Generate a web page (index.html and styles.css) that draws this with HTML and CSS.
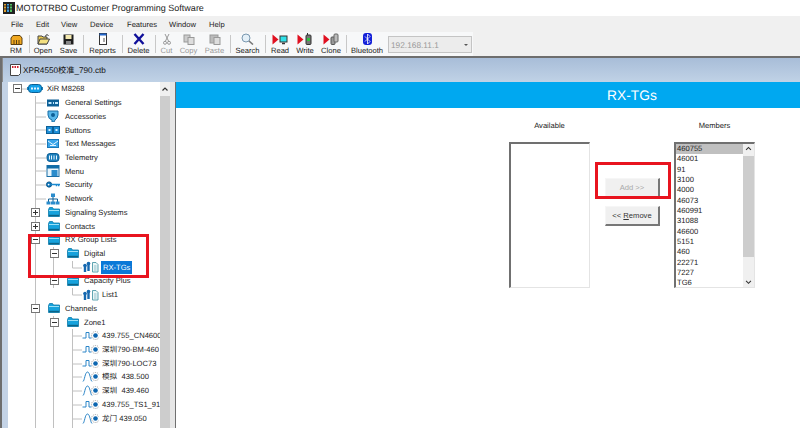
FILE: index.html
```html
<!DOCTYPE html>
<html lang="en">
<head>
  <meta charset="UTF-8">
  <title>MOTOTRBO Customer Programming Software</title>
  <link rel="stylesheet" href="styles.css">
</head>
<body>
  <svg class="defs" width="0" height="0">
    <symbol id="i-radio" viewBox="0 0 16 9"><path d="M0 4.500h16" stroke="#1c7fb8" stroke-width="3"/><rect x="1.500" y="0.500" width="13" height="8" rx="3" fill="#12a0e8" stroke="#0b5f94"/><path d="M4 4.500h8" stroke="#dff3ff" stroke-width="2" stroke-dasharray="2 1"/></symbol>
    <symbol id="i-settings" viewBox="0 0 14 10"><rect x="1" y="1.500" width="12" height="7" fill="#0c5f96"/><path d="M2.500 5h3M7 5h1M9 5h3" stroke="#bfe8ff" stroke-width="2"/></symbol>
    <symbol id="i-acc" viewBox="0 0 14 12"><path d="M2 1h10v4a5 7 0 0 1-3 5l-1 2H6V10A5 6 0 0 1 2 5z" fill="#58b7ea" stroke="#1a6ea6"/><circle cx="7" cy="5" r="2" fill="#0c5f96"/></symbol>
    <symbol id="i-buttons" viewBox="0 0 14 8"><rect x="0.500" y="0.500" width="6" height="7" fill="#1d8fd8" stroke="#0c5f96"/><rect x="7.500" y="0.500" width="6" height="7" fill="#1d8fd8" stroke="#0c5f96"/><path d="M2.500 3h2v2h-2zM9.500 3h2v2h-2z" fill="#d6f0ff"/></symbol>
    <symbol id="i-mail" viewBox="0 0 12 9"><rect x="0.500" y="0.500" width="11" height="8" fill="#39a5ea" stroke="#1a78b8"/><path d="M1 2l5 3.500L11 2M3 6.500h6" stroke="#e4f5ff" fill="none"/></symbol>
    <symbol id="i-tele" viewBox="0 0 13 9"><rect x="0.500" y="0.500" width="12" height="8" rx="3" fill="#1c7fbc" stroke="#0c5f96"/><path d="M3 2.500v4M5 2.500v4M7.500 2.500v4M10 2.500v4" stroke="#e6f6ff"/></symbol>
    <symbol id="i-menu" viewBox="0 0 13 12"><rect x="0.500" y="0.500" width="12" height="11" fill="#e8f5fc" stroke="#1a6ea6"/><rect x="0.500" y="0.500" width="12" height="3" fill="#0f6da8"/><rect x="5" y="5" width="6" height="6" fill="#2b8ccc"/></symbol>
    <symbol id="i-key" viewBox="0 0 16 7"><circle cx="3.500" cy="3.500" r="3" fill="#0c78c0" stroke="#074e80"/><circle cx="3" cy="3.500" r="1" fill="#fff"/><path d="M6 3.500h10M12 3.500v2M14.500 3.500v2" stroke="#1c8ad0" stroke-width="1.600"/></symbol>
    <symbol id="i-net" viewBox="0 0 14 12"><path d="M7 3v3M2.500 6h9M2.500 6v3M7 6v3M11.500 6v3" stroke="#0c5f96" fill="none"/><rect x="5" y="0.500" width="4" height="3.500" fill="#2b8ccc"/><rect x="0.500" y="8.500" width="4" height="3" fill="#2b8ccc"/><rect x="5" y="8.500" width="4" height="3" fill="#2b8ccc"/><rect x="9.500" y="8.500" width="4" height="3" fill="#2b8ccc"/></symbol>
    <symbol id="i-folder" viewBox="0 0 12 10"><path d="M0.500 2.500l1-2h3l1 1.500h6v7.500h-11z" fill="#16a2dc" stroke="#0d7aa8" stroke-width="0.800"/><path d="M1 3.500h10" stroke="#9be0f6"/><path d="M1 8.500h10" stroke="#0a6488" stroke-width="1.400"/></symbol>
    <symbol id="i-group" viewBox="0 0 17 12"><path d="M3 4v7M6.500 2v8" stroke="#1668b0" stroke-width="2.400"/><circle cx="3" cy="4.500" r="1.800" fill="#1668b0"/><circle cx="6.500" cy="2.500" r="1.800" fill="#1668b0"/><path d="M10.500 1.500h3.500l2 2v7.500h-5.500z" fill="#eaf7f7" stroke="#4f9aa8" stroke-width="0.900"/><path d="M12 5h2.500M12 7h2.500M12 9h2.500" stroke="#6fa8b8" stroke-width="0.700"/></symbol>
    <symbol id="i-digital" viewBox="0 0 16 11"><path d="M0 8h3.500V2.500h3V8H9" stroke="#2b85c8" fill="none"/><circle cx="13" cy="5.500" r="2.300" fill="#0d66b0"/><circle cx="13" cy="5.500" r="4" fill="none" stroke="#777" stroke-width="0.700" stroke-dasharray="1 1"/></symbol>
    <symbol id="i-analog" viewBox="0 0 16 11"><path d="M0.500 10.500C2 10 2.500 1 5 1s3 9 4.500 9.500" stroke="#2b85c8" fill="none"/><circle cx="13" cy="5.500" r="2.300" fill="#0d66b0"/><circle cx="13" cy="5.500" r="4" fill="none" stroke="#777" stroke-width="0.700" stroke-dasharray="1 1"/></symbol>
    <symbol id="i-red" viewBox="0 0 7 11"><path d="M0.500 0.500L6.500 5.500L0.500 10.500z" fill="#e01020"/></symbol>
  </svg>

  <div class="titlebar">
    <svg class="app-icon" width="12" height="12" viewBox="0 0 12 12"><rect width="12" height="12" fill="#222"/><path d="M2 2v8" stroke="#e0a030" stroke-width="2"/><path d="M5 2v8" stroke="#40a0e0" stroke-width="2"/><path d="M8 2v8" stroke="#50c060" stroke-width="2"/><path d="M0 4h12M0 7h12" stroke="#222"/></svg>
    <span>MOTOTRBO Customer Programming Software</span>
  </div>

  <div class="menubar">
    <span class="m-file">File</span><span class="m-edit">Edit</span><span class="m-view">View</span><span class="m-device">Device</span><span class="m-features">Features</span><span class="m-window">Window</span><span>Help</span>
  </div>

  <div class="toolbar">
    <div class="tb w24"><svg width="13" height="10" viewBox="0 0 13 10"><path d="M1 9.500V3l2-2.500h7L12 3v6.500z" fill="#f0a820" stroke="#5b3f10"/><path d="M4 9V5M6.500 9V5M9 9V5" stroke="#5b3f10"/></svg>RM</div>
    <i class="sep w2"></i>
    <div class="tb w26"><svg width="13" height="11" viewBox="0 0 13 11"><path d="M1 10V2h4l1 1h4v7z" fill="#e8c850" stroke="#444"/><path d="M1 10l2-5h9.500L10 10z" fill="#f4e080" stroke="#444"/><path d="M8.500 2.500c0-2 2-2 3-1" stroke="#222" fill="none"/></svg>Open</div>
    <div class="tb w25"><svg width="11" height="11" viewBox="0 0 11 11"><rect x="0.500" y="0.500" width="10" height="10" fill="#1e1e1e"/><rect x="2.500" y="1" width="6" height="4" fill="#f4e9b0"/><rect x="3" y="7" width="5" height="3.500" fill="#888"/></svg>Save</div>
    <i class="sep w4"></i>
    <div class="tb w35"><svg width="8" height="12" viewBox="0 0 8 12"><rect x="0.500" y="0.500" width="7" height="11" fill="#fff" stroke="#333"/><rect x="0.500" y="0.500" width="7" height="2" fill="#2266cc"/><path d="M5 5v4" stroke="#555"/></svg>Reports</div>
    <i class="sep w4"></i>
    <div class="tb w29"><svg width="12" height="12" viewBox="0 0 12 12"><path d="M1.500 1L10.500 11M10.500 1L1.500 11" stroke="#10109a" stroke-width="2.400"/></svg>Delete</div>
    <i class="sep w4"></i>
    <div class="tb w19 off"><svg width="8" height="12" viewBox="0 0 8 12"><path d="M2 1l3.500 7M6 1L2.500 8" stroke="#999"/><circle cx="2" cy="9.800" r="1.500" fill="none" stroke="#999"/><circle cx="6" cy="9.800" r="1.500" fill="none" stroke="#999"/></svg>Cut</div>
    <div class="tb w25 off"><svg width="12" height="11" viewBox="0 0 12 11"><rect x="1" y="1" width="6" height="7" fill="#ccc" stroke="#999"/><rect x="5" y="3.500" width="6" height="7" fill="#ddd" stroke="#999"/></svg>Copy</div>
    <div class="tb w27 off"><svg width="12" height="11" viewBox="0 0 12 11"><rect x="1" y="1" width="8" height="8" fill="#bbb" stroke="#999"/><rect x="5" y="3.500" width="6" height="7" fill="#ddd" stroke="#999"/></svg>Paste</div>
    <i class="sep w5"></i>
    <div class="tb w29"><svg width="13" height="12" viewBox="0 0 13 12"><circle cx="5" cy="5" r="4" fill="#e4f0f8" stroke="#7a98b0"/><path d="M8 8l4 3.500" stroke="#777" stroke-width="1.600"/></svg>Search</div>
    <i class="sep w6"></i>
    <div class="tb w24"><svg width="16" height="11" viewBox="0 0 16 11"><use href="#i-red" x="0" y="0" width="7" height="11"/><rect x="8" y="2" width="7" height="6" fill="#30e0e8" stroke="#333"/><path d="M10 9.500h3" stroke="#333" stroke-width="1.500"/></svg>Read</div>
    <div class="tb w26"><svg width="16" height="12" viewBox="0 0 16 12"><use href="#i-red" x="0" y="1" width="7" height="11"/><rect x="9" y="2" width="5" height="9.500" rx="1" fill="#777" stroke="#333"/><rect x="10" y="5" width="3" height="3" fill="#30c040"/><path d="M10.500 2V0" stroke="#333"/></svg>Write</div>
    <div class="tb w26"><svg width="16" height="12" viewBox="0 0 16 12"><use href="#i-red" x="0" y="1" width="7" height="11"/><rect x="8" y="4" width="4" height="7.500" rx="1" fill="#999" stroke="#555"/><rect x="11" y="1" width="4" height="8" rx="1" fill="#bbb" stroke="#666"/></svg>Clone</div>
    <i class="sep w5"></i>
    <div class="tb w36"><svg width="9" height="12" viewBox="0 0 9 12"><rect width="9" height="12" rx="3" fill="#1420d8"/><path d="M2 3.500l5 5-2.500 2.500V1L7 3.500l-5 5" stroke="#fff" stroke-width="0.800" fill="none"/></svg>Bluetooth</div>
    <div class="combo">192.168.11.1<b></b></div>
  </div>

  <div class="workspace">
    <div class="doc-title">
      <svg width="11" height="12" viewBox="0 0 11 12"><path d="M0.500 0.500h10v9l-2 2h-8z" fill="#fff" stroke="#444"/><path d="M2 3h7" stroke="#d02030" stroke-width="2" stroke-dasharray="1.500 1"/></svg>
      <span>XPR4550校准_790.ctb</span>
    </div>
    <div class="doc">
      <div class="tree-pane">
        <div class="tree">
          <svg class="guides" width="152" height="346" viewBox="0 0 152 346">
            <path d="M27.500 14V346M45.500 165V206M45.500 234V346M64.500 179V186M64.500 206V213M64.500 247V346M27.500 21H38M27.500 35H38M27.500 48H38M27.500 62H38M27.500 76H38M27.500 89H38M27.500 103H38M27.500 117H38M27.500 131H31M27.500 144H31M27.500 158H31M27.500 227H31M45.500 172H50M45.500 199H50M45.500 240H50M64.500 186H74M64.500 213H74M64.500 254H74M64.500 268H74M64.500 282H74M64.500 295H74M64.500 309H74M64.500 323H74M64.500 337H74" stroke="#c0c0c0" fill="none"/>
            <path d="M12 7H19" stroke="#c0c0c0"/>
          </svg>
          <div class="row r0"><i class="exp"></i><svg class="ic16" width="16" height="9"><use href="#i-radio"/></svg><span>XiR M8268</span></div>
          <div class="row r1"><svg width="14" height="10"><use href="#i-settings"/></svg><span>General Settings</span></div>
          <div class="row r1"><svg width="14" height="12"><use href="#i-acc"/></svg><span>Accessories</span></div>
          <div class="row r1"><svg width="14" height="8"><use href="#i-buttons"/></svg><span>Buttons</span></div>
          <div class="row r1"><svg width="14" height="9"><use href="#i-mail"/></svg><span>Text Messages</span></div>
          <div class="row r1"><svg width="14" height="9"><use href="#i-tele"/></svg><span>Telemetry</span></div>
          <div class="row r1"><svg width="14" height="12"><use href="#i-menu"/></svg><span>Menu</span></div>
          <div class="row r1"><svg width="14" height="7"><use href="#i-key"/></svg><span>Security</span></div>
          <div class="row r1"><svg width="14" height="12"><use href="#i-net"/></svg><span>Network</span></div>
          <div class="row r1f"><i class="exp plus"></i><svg width="12" height="10"><use href="#i-folder"/></svg><span>Signaling Systems</span></div>
          <div class="row r1f"><i class="exp plus"></i><svg width="12" height="10"><use href="#i-folder"/></svg><span>Contacts</span></div>
          <div class="row r1f"><i class="exp"></i><svg width="12" height="10"><use href="#i-folder"/></svg><span>RX Group Lists</span></div>
          <div class="row r2f"><i class="exp"></i><svg width="12" height="10"><use href="#i-folder"/></svg><span>Digital</span></div>
          <div class="row r3"><svg width="17" height="12"><use href="#i-group"/></svg><span class="sel">RX-TGs</span></div>
          <div class="row r2f"><i class="exp"></i><svg width="12" height="10"><use href="#i-folder"/></svg><span>Capacity Plus</span></div>
          <div class="row r3"><svg width="17" height="12"><use href="#i-group"/></svg><span>List1</span></div>
          <div class="row r1f"><i class="exp"></i><svg width="12" height="10"><use href="#i-folder"/></svg><span>Channels</span></div>
          <div class="row r2f"><i class="exp"></i><svg width="12" height="10"><use href="#i-folder"/></svg><span>Zone1</span></div>
          <div class="row r3"><svg width="17" height="11"><use href="#i-digital"/></svg><span>439.755_CN4600</span></div>
          <div class="row r3"><svg width="17" height="11"><use href="#i-digital"/></svg><span>深圳790-BM-460</span></div>
          <div class="row r3"><svg width="17" height="11"><use href="#i-digital"/></svg><span>深圳790-LOC73</span></div>
          <div class="row r3"><svg width="17" height="11"><use href="#i-analog"/></svg><span>模拟&nbsp; 438.500</span></div>
          <div class="row r3"><svg width="17" height="11"><use href="#i-analog"/></svg><span>深圳&nbsp; 439.460</span></div>
          <div class="row r3"><svg width="17" height="11"><use href="#i-digital"/></svg><span>439.755_TS1_91</span></div>
          <div class="row r3"><svg width="17" height="11"><use href="#i-analog"/></svg><span>龙门 439.050</span></div>
        </div>
        <div class="vscroll">
          <svg width="10" height="10" viewBox="0 0 10 10"><path d="M2.500 6.500L5 4l2.500 2.500" stroke="#333" stroke-width="1.200" fill="none"/></svg>
          <div class="vthumb"></div>
        </div>
      </div>

      <div class="main">
        <div class="banner">RX-TGs</div>
        <div class="picker">
          <div class="col">
            <div class="col-label">Available</div>
            <div class="listbox"></div>
          </div>
          <div class="actions">
            <button class="btn" disabled>Add &gt;&gt;</button>
            <button class="btn">&lt;&lt; <u>R</u>emove</button>
          </div>
          <div class="col">
            <div class="col-label">Members</div>
            <div class="listbox members">
              <ul>
                <li class="picked">460755</li>
                <li>46001</li>
                <li>91</li>
                <li>3100</li>
                <li>4000</li>
                <li>46073</li>
                <li>460991</li>
                <li>31088</li>
                <li>46600</li>
                <li>5151</li>
                <li>460</li>
                <li>22271</li>
                <li>7227</li>
                <li>TG6</li>
              </ul>
              <div class="lscroll">
                <svg width="11" height="10" viewBox="0 0 11 10"><path d="M3 6l2.500-2.500L8 6" stroke="#333" stroke-width="1.100" fill="none"/></svg>
                <div class="lthumb"></div>
                <svg width="11" height="10" viewBox="0 0 11 10"><path d="M3 4l2.500 2.500L8 4" stroke="#333" stroke-width="1.100" fill="none"/></svg>
              </div>
            </div>
          </div>
        </div>
      </div>
    </div>
  </div>

  <div class="callout callout-tree"></div>
  <div class="callout callout-add"></div>
</body>
</html>
```

FILE: styles.css
```css
html, body { margin: 0; padding: 0; }
body { width: 800px; height: 428px; overflow: hidden; font-family: "Liberation Sans", "Noto Sans CJK SC", sans-serif; font-size: 7.6px; color: #222; background: #f0f0f0; position: relative; display: flex; flex-direction: column; text-rendering: geometricPrecision; }
.defs { position: absolute; }

.titlebar { height: 16px; background: #fff; display: flex; align-items: center; padding-left: 3px; font-size: 9px; color: #222; gap: 1px; }
.menubar { height: 16px; background: #f0f0f0; display: flex; align-items: center; padding-left: 11px; color: #222; }
.menubar span { width: 40px; }
.menubar .m-file { width: 25px; }
.menubar .m-edit { width: 25px; }
.menubar .m-view { width: 29px; }
.menubar .m-device { width: 37px; }
.menubar .m-features { width: 42px; }
.menubar .m-window { width: 40px; }

.toolbar { height: 26px; flex: none; box-sizing: border-box; background: linear-gradient(90deg, #f7f8f9 0, #f7f8f9 473px, #f0f0f0 473px); border-bottom: 2px solid #6e6e6e; display: flex; padding-left: 4px; color: #222; }
.tb { display: flex; flex-direction: column; align-items: center; justify-content: flex-end; height: 24px; flex: none; white-space: nowrap; line-height: 10px; box-sizing: border-box; }
.tb svg { margin-bottom: 1px; }
.tb.off { color: #999; }
.w19 { width: 19px; }
.w24 { width: 24px; }
.w25 { width: 25px; }
.w26 { width: 26px; }
.w27 { width: 27px; }
.w29 { width: 29px; }
.w35 { width: 35px; }
.w36 { width: 36px; }
.sep { display: flex; justify-content: center; height: 18px; margin-top: 3px; flex: none; }
.sep::after { content: ""; width: 1px; background: #c8c8c8; }
.w2 { width: 2px; }
.w4 { width: 4px; }
.w5 { width: 5px; }
.w6 { width: 6px; }
.combo { width: 84px; height: 17px; margin: 4px 0 0 3px; box-sizing: border-box; border: 1px solid #c4c4c4; background: #ececec; color: #999; font-size: 8.3px; display: flex; align-items: center; justify-content: space-between; padding: 0 3px 0 2px; }
.combo b { border: 2px solid transparent; border-top: 2px solid #555; margin-top: 2px; }

.workspace { flex: 1; min-height: 0; background: linear-gradient(#9ab1d0, #b9cde4); border-left: 2px solid #6e6e6e; display: flex; flex-direction: column; }
.doc-title { height: 24px; flex: none; display: flex; align-items: center; padding-left: 7px; gap: 2px; font-size: 8.2px; color: #111; background: linear-gradient(#a8bdd8, #c0d2e6); border-left: 1px solid #8a8a8a; }
.doc { flex: 1; min-height: 0; display: flex; background: #c4d3e6; padding-left: 6px; }

.tree-pane { width: 162px; flex: none; display: flex; background: #fff; border-right: 5px solid #e6e6e6; }
.tree { width: 152px; flex: none; position: relative; overflow: hidden; white-space: nowrap; }
.guides { position: absolute; left: 0; top: 0; }
.row { height: 13.73px; display: flex; align-items: center; position: relative; }
.row svg { flex: none; }
.r0 { padding-left: 5px; }
.r0 svg { margin-left: 5px; }
.r0 span { margin-left: 4px; }
.r1 { padding-left: 38px; }
.r1 svg { margin-right: 5px; }
.r1f { padding-left: 23px; }
.r1f svg { margin: 0 5px 0 8px; }
.r2f { padding-left: 42px; }
.r2f svg { margin: 0 5px 0 8px; }
.r3 { padding-left: 74px; }
.r3 svg { margin-right: 2px; }
.r3 span { padding: 0 1px; }
.sel { background: #0a78d7; color: #fff; padding: 1px 2px !important; line-height: 11px; }
.exp { width: 9px; height: 9px; box-sizing: border-box; border: 1px solid #777; background: linear-gradient(#333, #333) center / 5px 1px no-repeat #fff; flex: none; }
.exp.plus { background: linear-gradient(#333, #333) center / 5px 1px no-repeat, linear-gradient(#333, #333) center / 1px 5px no-repeat, #fff; }

.vscroll { width: 10px; flex: none; background: #f0f0f0; display: flex; flex-direction: column; padding-top: 2px; box-sizing: border-box; }
.vthumb { flex: 1; background: #cdcdcd; margin-top: 2px; }

.main { flex: 1; display: flex; flex-direction: column; background: #fff; border-left: 1px solid #707070; }
.banner { height: 26px; flex: none; background: #00a8f0; color: #fff; font-size: 13.800px; display: flex; align-items: center; justify-content: center; padding-left: 288px; }
.picker { display: flex; padding: 13px 0 0 333px; }
.col { width: 81px; flex: none; }
.col-label { text-align: center; height: 21px; line-height: 10px; }
.listbox { height: 146px; box-sizing: border-box; border: 1px solid #e4e4e4; border-top: 2px solid #707070; border-left: 2px solid #707070; background: #fff; }
.actions { width: 84px; flex: none; display: flex; flex-direction: column; gap: 8px; padding: 57px 0 0 15px; box-sizing: border-box; }
.btn { width: 55px; height: 20px; padding: 0; box-sizing: border-box; font: inherit; color: #333; background: #f0f0f0; border: 1px solid #f6f6f6; border-right: 2px solid #777; border-bottom: 2px solid #777; }
.btn:disabled { color: #aaa; }

.members { display: flex; overflow: hidden; }
.members ul { flex: 1; margin: 0; padding: 0; list-style: none; line-height: 10.35px; }
.members li { padding-left: 1px; }
.members li.picked { background: #c0c0c0; }
.lscroll { width: 11px; flex: none; display: flex; flex-direction: column; background: #f0f0f0; }
.lthumb { height: 105px; background: #cdcdcd; margin: 2px 0 20px; }

.callout { position: absolute; border: 3px solid #e8141f; box-sizing: border-box; }
.callout-tree { left: 28px; top: 234px; width: 121px; height: 44px; }
.callout-add { left: 595px; top: 162px; width: 76px; height: 37px; }
```
